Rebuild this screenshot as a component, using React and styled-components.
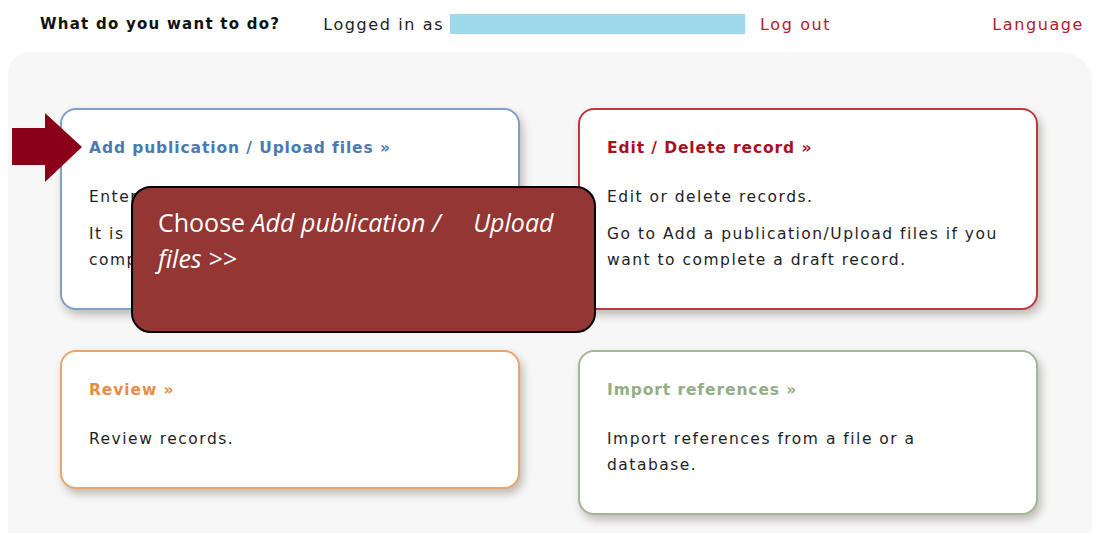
import React from "react";
import styled, { createGlobalStyle } from "styled-components";

const GlobalStyle = createGlobalStyle`
  html, body {
    margin: 0;
    padding: 0;
    background: #ffffff;
  }
  body {
    font-family: "DejaVu Sans", Verdana, sans-serif;
    font-size: 15px;
    color: #1e1e28;
  }
`;

const Page = styled.div`
  position: relative;
  width: 1094px;
  height: 533px;
  overflow: hidden;
`;

const TopBar = styled.header`
  display: flex;
  align-items: center;
  height: 48px;
  padding: 0 10px 0 40px;
  font-size: 16px;
`;

const Heading = styled.h1`
  margin: 0 43px 0 0;
  font-size: 15px;
  font-weight: bold;
  letter-spacing: 1.25px;
  color: #111;
`;

const LoggedIn = styled.span`
  color: #222;
  letter-spacing: 1.6px;
`;

const UserBox = styled.span`
  display: inline-block;
  width: 295px;
  height: 20px;
  margin: 0 15px 0 6px;
  background: #9dd9ea;
`;

const TopLink = styled.a`
  color: #b1202b;
  text-decoration: none;
  letter-spacing: 1.6px;
  margin-left: ${(p) => (p.$push ? "auto" : "0")};
`;

const Panel = styled.main`
  margin: 5px 2px 0 8px;
  height: 480px;
  background: #f7f7f7;
  border-radius: 22px 30px 0 0;
  box-shadow: 0 -1px 3px rgba(0, 0, 0, 0.03);
  padding: 55px 0 0 52px;
  box-sizing: border-box;
`;

const Grid = styled.div`
  display: grid;
  grid-template-columns: 460px 460px;
  column-gap: 58px;
  row-gap: 40px;
  align-items: start;
`;

const Card = styled.section`
  box-sizing: border-box;
  background: #ffffff;
  border: 2px solid ${(p) => p.$border};
  border-radius: 16px;
  padding: 28px 28px 35px 27px;
  box-shadow: 3px 5px 8px rgba(60, 50, 30, 0.3);
`;

const CardTitle = styled.a`
  display: block;
  font-weight: bold;
  font-size: 15.5px;
  letter-spacing: 0.9px;
  line-height: 20px;
  color: ${(p) => p.$color};
  text-decoration: none;
  margin-bottom: 26px;
`;

const CardText = styled.p`
  margin: 0 0 11px 0;
  line-height: 26px;
  font-size: 15.5px;
  letter-spacing: 1.5px;
  color: #1e1e28;
  &:last-child {
    margin-bottom: 0;
  }
`;

const Pointer = styled.svg`
  position: absolute;
  left: 10px;
  top: 111px;
`;

const Callout = styled.div`
  position: absolute;
  left: 131px;
  top: 186px;
  width: 465px;
  height: 147px;
  box-sizing: border-box;
  background: #943634;
  border: 2px solid #000;
  border-radius: 20px;
  padding: 16px 20px 0 25px;
  color: #ffffff;
  font-family: "Open Sans", "Noto Sans", sans-serif;
  font-size: 25px;
  line-height: 36px;
  letter-spacing: 0;
`;

const cards = [
  {
    title: "Add publication / Upload files",
    color: "#4c79b0",
    border: "#7f9fcb",
    text: [
      "Enter a new publication or upload files.",
      "It is also possible to save a draft and complete it later.",
    ],
  },
  {
    title: "Edit / Delete record",
    color: "#a8111f",
    border: "#bb3a40",
    text: [
      "Edit or delete records.",
      "Go to Add a publication/Upload files if you want to complete a draft record.",
    ],
  },
  {
    title: "Review",
    color: "#e88c45",
    border: "#eba56c",
    text: ["Review records."],
  },
  {
    title: "Import references",
    color: "#95ad86",
    border: "#a2b796",
    text: ["Import references from a file or a database."],
  },
];

export default function App() {
  return (
    <Page>
      <GlobalStyle />
      <TopBar>
        <Heading>What do you want to do?</Heading>
        <LoggedIn>Logged in as</LoggedIn>
        <UserBox />
        <TopLink href="#">Log out</TopLink>
        <TopLink href="#" $push>
          Language
        </TopLink>
      </TopBar>
      <Panel>
        <Grid>
          {cards.map((c) => (
            <Card key={c.title} $border={c.border}>
              <CardTitle href="#" $color={c.color}>
                {c.title} »
              </CardTitle>
              {c.text.map((t) => (
                <CardText key={t}>{t}</CardText>
              ))}
            </Card>
          ))}
        </Grid>
      </Panel>
      <Pointer width="74" height="72" viewBox="0 0 74 72">
        <polygon points="2,17 35,17 35,2 72,36 35,71 35,54 2,54" fill="#8b0019" />
      </Pointer>
      <Callout>
        Choose <em>Add publication /&nbsp;&nbsp;&nbsp;&nbsp; Upload files &gt;&gt;</em>
      </Callout>
    </Page>
  );
}
